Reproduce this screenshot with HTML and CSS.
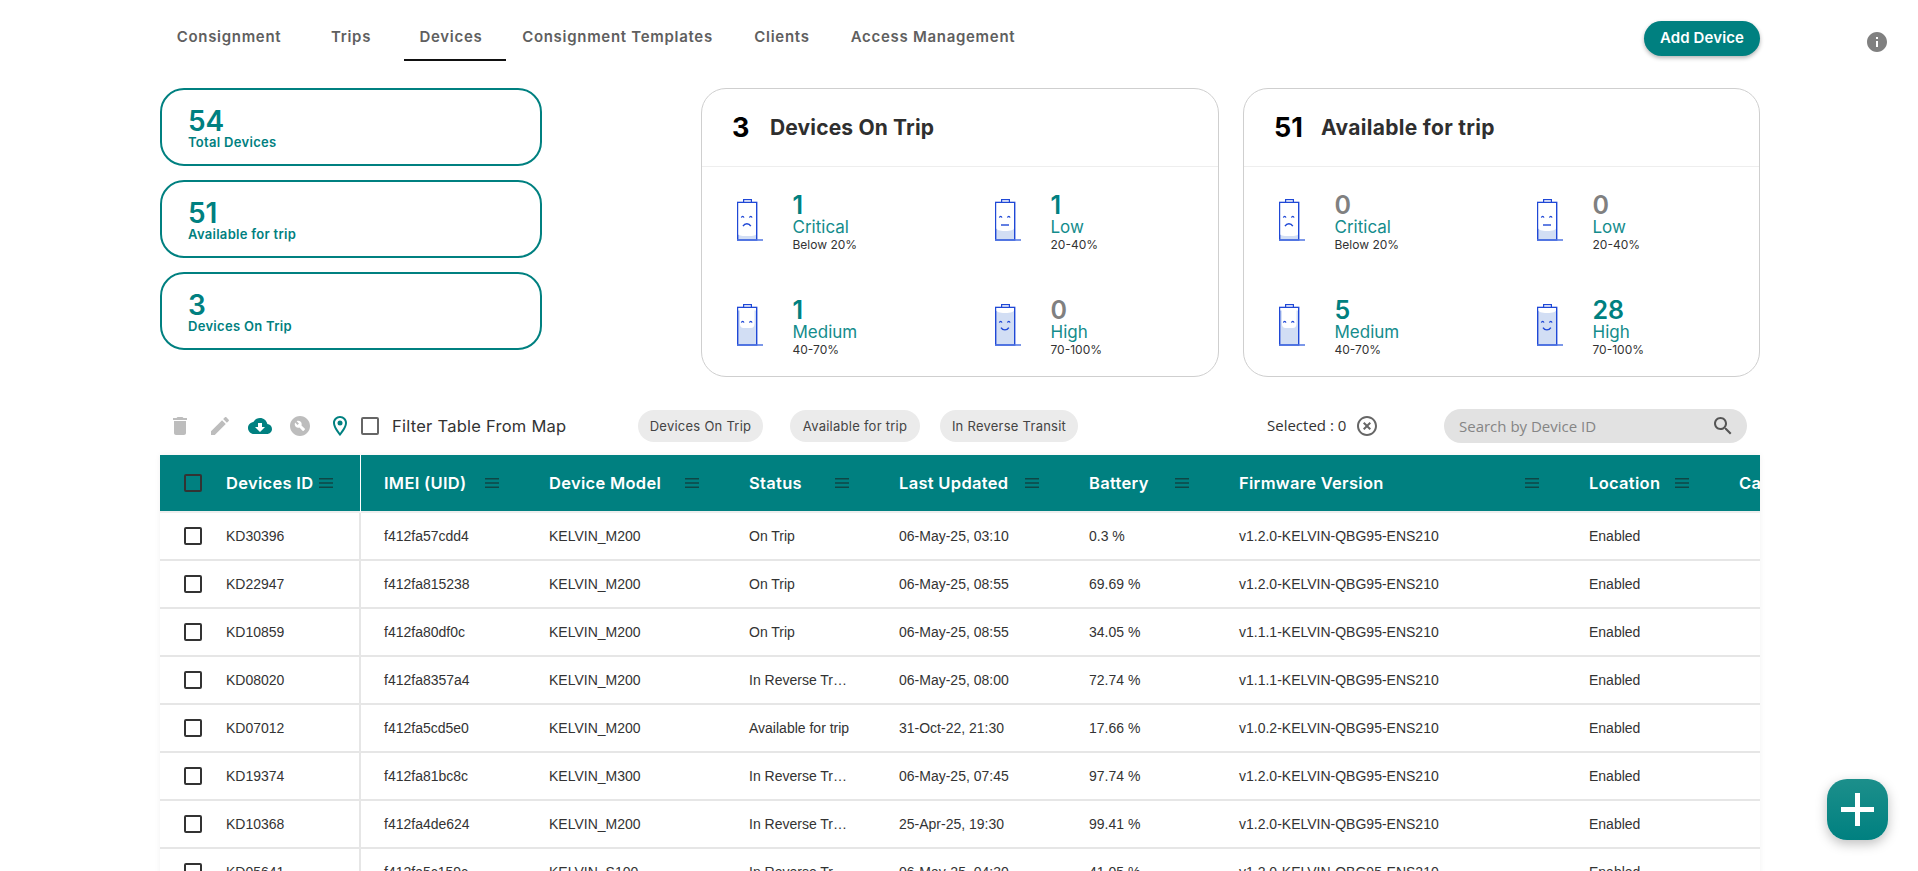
FILE: index.html
```html
<!DOCTYPE html>
<html lang="en">
<head>
<meta charset="utf-8">
<title>Devices</title>
<link rel="stylesheet" href="styles.css">
</head>
<body>
<svg class="defs" xmlns="http://www.w3.org/2000/svg">
  <symbol id="bat-base" viewBox="0 0 26 42">
    <rect x="6.600" y="0.600" width="7.800" height="3" fill="#fff" stroke="#1f48d6" stroke-width="1.200"/>
    <rect x="0.700" y="3.400" width="19" height="37.600" fill="#d2def4" stroke="#1f48d6" stroke-width="1.400"/>
    <line x1="0" y1="41" x2="26" y2="41" stroke="#4f74e2" stroke-width="1.500"/>
  </symbol>
  <symbol id="eyes" viewBox="0 0 26 42">
    <path d="M4.400 18.600c.5-1.600 2-1.600 2.500 0M12.500 18.600c.5-1.600 2-1.600 2.500 0" fill="none" stroke="#1f48d6" stroke-width="1.300"/>
  </symbol>
  <symbol id="bat-critical" viewBox="0 0 26 42">
    <use href="#bat-base"/>
    <path d="M1.400 4.100h17.600v31c0 1.600-2 2-8.800 2s-8.800-.4-8.800-2z" fill="#fff"/>
    <use href="#eyes"/>
    <path d="M6 27.200c1.800-3.200 6-3.200 7.800 0" fill="none" stroke="#1f48d6" stroke-width="1.400"/>
  </symbol>
  <symbol id="bat-low" viewBox="0 0 26 42">
    <use href="#bat-base"/>
    <path d="M1.400 4.100h17.600v25c0 1.800-3 3-8.800 3s-8.800-1.200-8.800-3z" fill="#fff"/>
    <use href="#eyes"/>
    <line x1="6" y1="26" x2="14" y2="26" stroke="#1f48d6" stroke-width="1.400"/>
  </symbol>
  <symbol id="bat-medium" viewBox="0 0 26 42">
    <use href="#bat-base"/>
    <path d="M1.400 4.100h17.600v2.400h-1.500v13c0 3-1.400 4.500-3.600 4.500h-7.400c-2.200 0-3.600-1.500-3.600-4.500v-13h-1.500z" fill="#fff"/>
    <use href="#eyes"/>
  </symbol>
  <symbol id="bat-high" viewBox="0 0 26 42">
    <use href="#bat-base"/>
    <path d="M1.400 4.100h17.600v2c0 2-3 3-8.800 3s-8.800-1-8.800-3z" fill="#fff"/>
    <use href="#eyes"/>
    <path d="M6 23.600c1.800 3 6 3 7.800 0" fill="none" stroke="#1f48d6" stroke-width="1.400"/>
  </symbol>
  <symbol id="menu" viewBox="0 0 14 10">
    <path d="M0 .75h14M0 5h14M0 9.250h14" stroke="#0f4645" stroke-width="1.400" fill="none"/>
  </symbol>
</svg>

<div class="page">
  <header class="nav">
    <nav class="tabs">
      <a class="tab tab-consignment">Consignment</a>
      <a class="tab tab-trips">Trips</a>
      <a class="tab tab-devices active">Devices</a>
      <a class="tab tab-templates">Consignment Templates</a>
      <a class="tab tab-clients">Clients</a>
      <a class="tab tab-access">Access Management</a>
    </nav>
    <button class="add-btn">Add Device</button>
  </header>
  <svg class="info" viewBox="0 0 24 24"><path d="M12 2C6.480 2 2 6.480 2 12s4.480 10 10 10 10-4.480 10-10S17.530 2 12 2zm1 15h-2v-6h2v6zm0-8h-2V7h2v2z"/></svg>

  <section class="summary">
    <div class="totals">
      <div class="total"><div class="total-num">54</div><div class="total-label">Total Devices</div></div>
      <div class="total"><div class="total-num">51</div><div class="total-label">Available for trip</div></div>
      <div class="total"><div class="total-num">3</div><div class="total-label">Devices On Trip</div></div>
    </div>
    <div class="panels">
      <article class="panel panel-trip">
        <div class="panel-head"><span class="panel-num">3</span><span class="panel-title">Devices On Trip</span></div>
        <div class="levels">
          <div class="level"><svg class="bat"><use href="#bat-critical"/></svg><div><div class="lv-num">1</div><div class="lv-name">Critical</div><div class="lv-sub">Below 20%</div></div></div>
          <div class="level"><svg class="bat"><use href="#bat-low"/></svg><div><div class="lv-num">1</div><div class="lv-name">Low</div><div class="lv-sub">20-40%</div></div></div>
          <div class="level"><svg class="bat"><use href="#bat-medium"/></svg><div><div class="lv-num">1</div><div class="lv-name">Medium</div><div class="lv-sub">40-70%</div></div></div>
          <div class="level"><svg class="bat"><use href="#bat-high"/></svg><div><div class="lv-num zero">0</div><div class="lv-name">High</div><div class="lv-sub">70-100%</div></div></div>
        </div>
      </article>
      <article class="panel panel-avail">
        <div class="panel-head"><span class="panel-num">51</span><span class="panel-title">Available for trip</span></div>
        <div class="levels">
          <div class="level"><svg class="bat"><use href="#bat-critical"/></svg><div><div class="lv-num zero">0</div><div class="lv-name">Critical</div><div class="lv-sub">Below 20%</div></div></div>
          <div class="level"><svg class="bat"><use href="#bat-low"/></svg><div><div class="lv-num zero">0</div><div class="lv-name">Low</div><div class="lv-sub">20-40%</div></div></div>
          <div class="level"><svg class="bat"><use href="#bat-medium"/></svg><div><div class="lv-num">5</div><div class="lv-name">Medium</div><div class="lv-sub">40-70%</div></div></div>
          <div class="level"><svg class="bat"><use href="#bat-high"/></svg><div><div class="lv-num">28</div><div class="lv-name">High</div><div class="lv-sub">70-100%</div></div></div>
        </div>
      </article>
    </div>
  </section>

  <section class="toolbar">
    <div class="tools">
      <svg class="ic muted" viewBox="0 0 24 24"><path d="M6 19c0 1.100.9 2 2 2h8c1.100 0 2-.9 2-2V7H6v12zM19 4h-3.500l-1-1h-5l-1 1H5v2h14V4z"/></svg>
      <svg class="ic muted" viewBox="0 0 24 24"><path d="M3 17.250V21h3.750L17.810 9.940l-3.750-3.750L3 17.250zM20.710 7.040c.39-.39.39-1.020 0-1.410l-2.340-2.340c-.39-.39-1.020-.39-1.410 0l-1.830 1.830 3.750 3.750 1.830-1.830z"/></svg>
      <svg class="ic teal" viewBox="0 0 24 24"><path d="M19.350 10.040C18.670 6.590 15.640 4 12 4 9.110 4 6.600 5.640 5.350 8.040 2.340 8.360 0 10.910 0 14c0 3.310 2.690 6 6 6h13c2.760 0 5-2.240 5-5 0-2.640-2.050-4.780-4.650-4.960zM17 13l-5 5-5-5h3V9h4v4h3z"/></svg>
      <svg class="ic muted" viewBox="0 0 24 24"><path fill-rule="evenodd" d="M12 2C6.480 2 2 6.480 2 12c0 5.520 4.480 10 10 10s10-4.480 10-10C22 6.480 17.520 2 12 2zM16.900 15.490l-1.400 1.400c-.2.2-.51.2-.71 0l-3.410-3.410c-1.220.43-2.640.17-3.620-.81-1.110-1.110-1.300-2.790-.59-4.100l2.350 2.350 1.410-1.410L8.580 7.170c1.320-.71 2.990-.52 4.100.59.98.98 1.240 2.400.81 3.620l3.410 3.410c.19.19.19.51 0 .7z"/></svg>
      <svg class="ic teal" viewBox="0 0 24 24"><path d="M12 2C8.130 2 5 5.130 5 9c0 5.250 7 13 7 13s7-7.750 7-13c0-3.870-3.130-7-7-7zM7 9c0-2.760 2.240-5 5-5s5 2.240 5 5c0 2.880-2.880 7.190-5 9.880C9.920 16.210 7 11.850 7 9z"/><circle cx="12" cy="9" r="2.500"/></svg>
      <span class="cb cb-filter"></span>
      <span class="filter-label">Filter Table From Map</span>
    </div>
    <div class="chips">
      <span class="chip chip-a">Devices On Trip</span>
      <span class="chip chip-b">Available for trip</span>
      <span class="chip chip-c">In Reverse Transit</span>
    </div>
    <div class="selected">
      <span class="selected-t">Selected : 0</span>
      <svg class="ic-clear" viewBox="0 0 24 24"><path d="M14.590 8L12 10.590 9.410 8 8 9.410 10.590 12 8 14.590 9.410 16 12 13.410 14.590 16 16 14.590 13.410 12 16 9.410 14.590 8zM12 2C6.470 2 2 6.470 2 12s4.470 10 10 10 10-4.470 10-10S17.530 2 12 2zm0 18c-4.410 0-8-3.590-8-8s3.590-8 8-8 8 3.590 8 8-3.590 8-8 8z"/></svg>
    </div>
    <div class="search">
      <span class="search-ph">Search by Device ID</span>
      <svg class="ic-search" viewBox="0 0 24 24"><path d="M15.500 14h-.79l-.28-.27C15.410 12.590 16 11.110 16 9.500 16 5.910 13.090 3 9.500 3S3 5.910 3 9.500 5.910 16 9.500 16c1.610 0 3.090-.59 4.230-1.570l.27.28v.79l5 4.990L20.490 19l-4.990-5zm-6 0C7.010 14 5 11.990 5 9.500S7.010 5 9.500 5 14 7.010 14 9.500 11.990 14 9.500 14z"/></svg>
    </div>
  </section>

  <section class="grid-wrap">
    <table class="grid">
      <colgroup>
        <col class="c1"><col class="c2"><col class="c3"><col class="c4"><col class="c5"><col class="c6"><col class="c7"><col class="c8"><col class="c9">
      </colgroup>
      <thead>
        <tr>
          <th class="first"><div class="th"><span class="cb"></span><span class="th-t">Devices ID</span><svg class="mi"><use href="#menu"/></svg></div></th>
          <th><div class="th"><span>IMEI (UID)</span><svg class="mi"><use href="#menu"/></svg></div></th>
          <th><div class="th"><span>Device Model</span><svg class="mi"><use href="#menu"/></svg></div></th>
          <th><div class="th"><span>Status</span><svg class="mi"><use href="#menu"/></svg></div></th>
          <th><div class="th"><span>Last Updated</span><svg class="mi"><use href="#menu"/></svg></div></th>
          <th><div class="th"><span>Battery</span><svg class="mi"><use href="#menu"/></svg></div></th>
          <th><div class="th"><span>Firmware Version</span><svg class="mi"><use href="#menu"/></svg></div></th>
          <th><div class="th"><span>Location</span><svg class="mi"><use href="#menu"/></svg></div></th>
          <th><div class="th"><span>Ca</span></div></th>
        </tr>
      </thead>
      <tbody>
        <tr><td class="first"><div class="id"><span class="cb"></span>KD30396</div></td><td>f412fa57cdd4</td><td>KELVIN_M200</td><td>On Trip</td><td>06-May-25, 03:10</td><td>0.3 %</td><td>v1.2.0-KELVIN-QBG95-ENS210</td><td>Enabled</td><td></td></tr>
        <tr><td class="first"><div class="id"><span class="cb"></span>KD22947</div></td><td>f412fa815238</td><td>KELVIN_M200</td><td>On Trip</td><td>06-May-25, 08:55</td><td>69.69 %</td><td>v1.2.0-KELVIN-QBG95-ENS210</td><td>Enabled</td><td></td></tr>
        <tr><td class="first"><div class="id"><span class="cb"></span>KD10859</div></td><td>f412fa80df0c</td><td>KELVIN_M200</td><td>On Trip</td><td>06-May-25, 08:55</td><td>34.05 %</td><td>v1.1.1-KELVIN-QBG95-ENS210</td><td>Enabled</td><td></td></tr>
        <tr><td class="first"><div class="id"><span class="cb"></span>KD08020</div></td><td>f412fa8357a4</td><td>KELVIN_M200</td><td>In Reverse Transit</td><td>06-May-25, 08:00</td><td>72.74 %</td><td>v1.1.1-KELVIN-QBG95-ENS210</td><td>Enabled</td><td></td></tr>
        <tr><td class="first"><div class="id"><span class="cb"></span>KD07012</div></td><td>f412fa5cd5e0</td><td>KELVIN_M200</td><td>Available for trip</td><td>31-Oct-22, 21:30</td><td>17.66 %</td><td>v1.0.2-KELVIN-QBG95-ENS210</td><td>Enabled</td><td></td></tr>
        <tr><td class="first"><div class="id"><span class="cb"></span>KD19374</div></td><td>f412fa81bc8c</td><td>KELVIN_M300</td><td>In Reverse Transit</td><td>06-May-25, 07:45</td><td>97.74 %</td><td>v1.2.0-KELVIN-QBG95-ENS210</td><td>Enabled</td><td></td></tr>
        <tr><td class="first"><div class="id"><span class="cb"></span>KD10368</div></td><td>f412fa4de624</td><td>KELVIN_M200</td><td>In Reverse Transit</td><td>25-Apr-25, 19:30</td><td>99.41 %</td><td>v1.2.0-KELVIN-QBG95-ENS210</td><td>Enabled</td><td></td></tr>
        <tr><td class="first"><div class="id"><span class="cb"></span>KD05641</div></td><td>f412fa5c159c</td><td>KELVIN_S100</td><td>In Reverse Transit</td><td>06-May-25, 04:30</td><td>41.05 %</td><td>v1.2.0-KELVIN-QBG95-ENS210</td><td>Enabled</td><td></td></tr>
      </tbody>
    </table>
  </section>
</div>

<button class="fab" aria-label="Add"><span class="fab-plus"></span></button>
</body>
</html>
```
FILE: styles.css
```css
* { box-sizing: border-box; }
html, body { margin: 0; height: 100%; overflow: hidden; background: #fff; }
body { font-family: "Inter", "Liberation Sans", sans-serif; color: #333; }
.defs { display: none; }

.page { position: relative; padding: 13px 158px 0 160px; }

/* nav */
.nav { display: flex; align-items: center; justify-content: space-between; height: 48px; }
.tabs { display: flex; height: 48px; }
.tab { display: flex; align-items: center; justify-content: center; height: 48px; font-size: 15px; font-weight: 600; color: #5f5f5f; letter-spacing: .7px; border-bottom: 2px solid transparent; }
.tab.active { border-bottom-color: #111; }
.tab-consignment { width: 138px; }
.tab-trips { width: 106px; }
.tab-devices { width: 102px; padding-right: 8px; }
.tab-templates { width: 223px; }
.tab-clients { width: 106px; }
.tab-access { width: 196px; }
.add-btn { width: 116px; height: 35px; margin-top: 3px; border: 0; border-radius: 18px; background: #008080; color: #fff; font: 600 15px "Inter", sans-serif; letter-spacing: .1px; box-shadow: 0 2px 4px rgba(0,0,0,.3); padding: 0 0 2px; }
.info { position: absolute; top: 30px; left: 1865px; width: 24px; height: 24px; fill: #808080; }

/* summary */
.summary { display: flex; justify-content: space-between; margin-top: 27px; }
.totals { display: flex; flex-direction: column; gap: 13.700px; width: 382px; }
.total { height: 78.300px; border: 2px solid #008080; border-radius: 24px; padding: 17px 26px 0; color: #008080; }
.total-num { font-size: 28px; font-weight: 600; line-height: 28px; letter-spacing: -.2px; }
.total-label { font-size: 13px; font-weight: 600; line-height: 14px; letter-spacing: .3px; }
.panels { display: flex; gap: 24px; }
.panel { height: 289px; border: 1px solid #cfcfcf; border-radius: 25px; }
.panel-trip { width: 518px; }
.panel-avail { width: 517px; }
.panel-head { display: flex; align-items: center; height: 78px; border-bottom: 1px solid #eee; padding-left: 30px; }
.panel-num { font-size: 27px; font-weight: 700; color: #000; width: 38px; }
.panel-avail .panel-num { width: 47px; }
.panel-title { font-size: 21px; font-weight: 700; color: #2f2f2f; letter-spacing: .15px; }
.panel-avail .panel-title { letter-spacing: .3px; }
.levels { display: grid; grid-template-columns: 258px 258px; grid-auto-rows: 62px; row-gap: 43px; padding: 26px 0 0 35px; }
.level { display: flex; align-items: flex-start; }
.bat { width: 26px; height: 42px; margin: 6px 29.500px 0 0; flex: none; }
.lv-num { font-size: 25px; font-weight: 600; line-height: 24px; color: #008080; }
.lv-num.zero { color: #808080; }
.lv-name { font-size: 17px; line-height: 20px; color: #148c8c; }
.lv-sub { font-size: 12px; line-height: 16px; color: #333; }

/* toolbar */
.toolbar { display: flex; align-items: center; height: 34px; margin-top: 32px; padding: 0 13px 0 8px; }
.tools { display: flex; align-items: center; gap: 16px; width: 470px; flex: none; }
.ic { width: 24px; height: 24px; flex: none; }
.muted { fill: #bdbdbd; }
.teal { fill: #008080; }
.cb { display: inline-block; flex: none; width: 18px; height: 18px; border: 2px solid #333; border-radius: 2px; }
.cb-filter { border-color: #666; margin-left: -7px; }
.filter-label { margin-left: -3px; font-size: 16.500px; letter-spacing: .25px; color: #333; white-space: nowrap; }
.chips { display: flex; align-items: center; flex: none; }
.chip { display: flex; align-items: center; justify-content: center; height: 32px; border-radius: 16px; background: #ebebeb; font-size: 13px; letter-spacing: .25px; color: #444; }
.chip-a { width: 125px; }
.chip-b { width: 130px; margin-left: 27px; }
.chip-c { width: 138px; margin-left: 20px; }
.selected { display: flex; align-items: center; margin-left: 189px; width: 177px; flex: none; }
.selected-t { width: 88px; padding-bottom: 2px; font: 15px "Open Sans", sans-serif; color: #333; }
.ic-clear { width: 24px; height: 24px; fill: #666; flex: none; }
.search { display: flex; align-items: center; justify-content: space-between; width: 303px; height: 34px; padding: 0 12px 0 15px; background: #e2e2e2; border-radius: 17px; flex: none; }
.search-ph { padding-bottom: 1px; font: 15px "Open Sans", sans-serif; color: #858585; }
.ic-search { width: 24px; height: 24px; fill: #555; }

/* table */
.grid-wrap { margin-top: 12px; width: 1600px; overflow: hidden; box-shadow: 0 0 6px rgba(0,0,0,.06); }
.grid { width: 1705px; table-layout: fixed; border-collapse: separate; border-spacing: 0; }
.c1 { width: 201px; }
.c2 { width: 164px; }
.c3 { width: 200px; }
.c4 { width: 150px; }
.c5 { width: 190px; }
.c6 { width: 150px; }
.c7 { width: 350px; }
.c8 { width: 150px; }
.c9 { width: 150px; }
.grid th { height: 58px; padding: 0 26px 0 24px; background: #008080; background-clip: padding-box; border-bottom: 2px solid #eee; color: #fff; font-size: 16.500px; font-weight: 600; letter-spacing: .3px; text-align: left; white-space: nowrap; }
.th { display: flex; align-items: center; justify-content: space-between; }
.th-t { margin-left: 24px; margin-right: auto; }
.mi { width: 14px; height: 10px; flex: none; }
.grid td { height: 48px; padding: 0 24px; border-bottom: 2px solid #e6e6e6; font: 14px "Liberation Sans", sans-serif; color: #333; white-space: nowrap; overflow: hidden; text-overflow: ellipsis; }
.grid .first { border-right: 2px solid #e6e6e6; }
.grid th.first { border-right: 1px solid #fff; padding-right: 27px; }
.grid tr > :nth-child(2) { padding-left: 23px; }
.id { display: flex; align-items: center; gap: 24px; }

/* fab */
.fab { position: fixed; right: 30px; bottom: 31px; display: flex; align-items: center; justify-content: center; width: 61px; height: 61px; border: 0; padding: 0; border-radius: 20px; background: linear-gradient(#1c8f8b, #008080); box-shadow: 0 4px 12px rgba(0,0,0,.25); }
.fab-plus { display: block; width: 33px; height: 33px; background: linear-gradient(#fff, #fff) center / 33px 5px no-repeat, linear-gradient(#fff, #fff) center / 5px 33px no-repeat; }
```
